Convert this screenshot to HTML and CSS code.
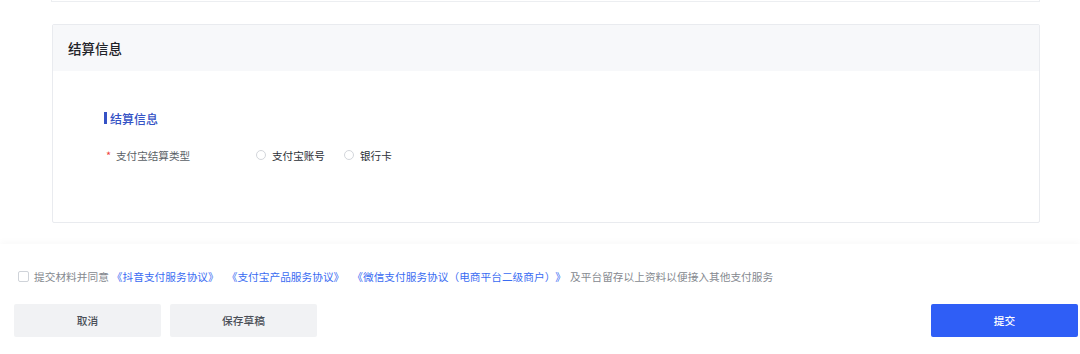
FILE: index.html
```html
<!DOCTYPE html>
<html lang="zh-CN">
<head>
<meta charset="utf-8">
<title>结算信息</title>
<link rel="stylesheet" href="styles.css">
</head>
<body>
<div class="page">
  <div class="main">
    <div class="prev-card"></div>
    <section class="card">
      <div class="card-header">结算信息</div>
      <div class="card-body">
        <div class="sub-title"><span class="bar"></span><span>结算信息</span></div>
        <div class="form-row">
          <div class="label"><span class="req">*</span><span>支付宝结算类型</span></div>
          <div class="radios">
            <label class="radio"><span class="circle"></span><span>支付宝账号</span></label>
            <label class="radio"><span class="circle"></span><span>银行卡</span></label>
          </div>
        </div>
      </div>
    </section>
  </div>
  <footer class="footer">
    <div class="agree">
      <span class="checkbox"></span>
      <span class="gray">提交材料并同意</span>
      <a class="link">《抖音支付服务协议》</a>
      <a class="link">《支付宝产品服务协议》</a>
      <a class="link">《微信支付服务协议（电商平台二级商户）》</a>
      <span class="gray">及平台留存以上资料以便接入其他支付服务</span>
    </div>
    <div class="actions">
      <div class="left-actions">
        <button class="btn btn-gray">取消</button>
        <button class="btn btn-gray">保存草稿</button>
      </div>
      <button class="btn btn-primary">提交</button>
    </div>
  </footer>
</div>
</body>
</html>
```

FILE: styles.css
```css
* { box-sizing: border-box; }
html, body {
  margin: 0;
  padding: 0;
  background: #fff;
  font-family: "Noto Sans CJK SC", "Noto Sans", sans-serif;
  text-spacing-trim: space-all;
}
.page {
  width: 1080px;
  height: 354px;
  overflow: hidden;
}
.main {
  padding: 0 40px 0 51px;
}
.prev-card {
  height: 2px;
  border: 1px solid #eceef1;
  border-top: none;
}
.card {
  margin-top: 22px;
  margin-left: 1px;
  border: 1px solid #e9ebef;
  border-radius: 2px;
}
.card-header {
  height: 46px;
  background: #f7f8fa;
  padding-left: 15px;
  display: flex;
  align-items: center;
  font-size: 13.5px;
  font-weight: 500;
  color: #1f2329;
}
.card-body {
  height: 151px;
  padding: 38px 0 0 51px;
}
.sub-title {
  display: flex;
  align-items: center;
  height: 18px;
  font-size: 12px;
  font-weight: 500;
  color: #3552c5;
}
.sub-title .bar {
  width: 3px;
  height: 12px;
  background: #3552c5;
  margin-right: 3px;
}
.form-row {
  margin-top: 19px;
  display: flex;
  align-items: center;
  height: 18px;
  font-size: 10.6px;
}
.label {
  width: 152px;
  display: flex;
  align-items: center;
  color: #5a5f66;
  padding-left: 2px;
}
.req {
  color: #f0443f;
  width: 10px;
  font-size: 11px;
}
.radios {
  display: flex;
  align-items: center;
  gap: 19px;
}
.radio {
  display: flex;
  align-items: center;
  color: #2b2f36;
}
.circle {
  width: 10px;
  height: 10px;
  border: 1px solid #d3d6db;
  border-radius: 50%;
  margin-right: 6px;
  background: #fff;
}
.footer {
  margin-top: 21px;
  padding: 23px 2px 0 14px;
  box-shadow: 0 -3px 6px rgba(0, 0, 0, 0.025);
  height: 120px;
}
.agree {
  display: flex;
  align-items: center;
  height: 18px;
  font-size: 10.7px;
  padding-left: 4px;
}
.checkbox {
  width: 11px;
  height: 11px;
  border: 1px solid #cfd3d9;
  border-radius: 2px;
  margin-right: 5px;
}
.gray { color: #85898f; }
.link {
  color: #3a6cf2;
  margin-left: 3px;
}
.link + .link { margin-left: 8px; }
.link + .gray { margin-left: 4px; }
.actions {
  margin-top: 19px;
  display: flex;
  justify-content: space-between;
}
.left-actions {
  display: flex;
  gap: 9px;
}
.btn {
  width: 147px;
  height: 33px;
  border: none;
  border-radius: 2px;
  font-family: inherit;
  font-size: 10.7px;
  font-weight: 500;
  padding: 0;
}
.btn-gray {
  background: #f1f2f4;
  color: #4a4f57;
}
.btn-primary {
  background: #2f5ef6;
  color: #fff;
}
```
